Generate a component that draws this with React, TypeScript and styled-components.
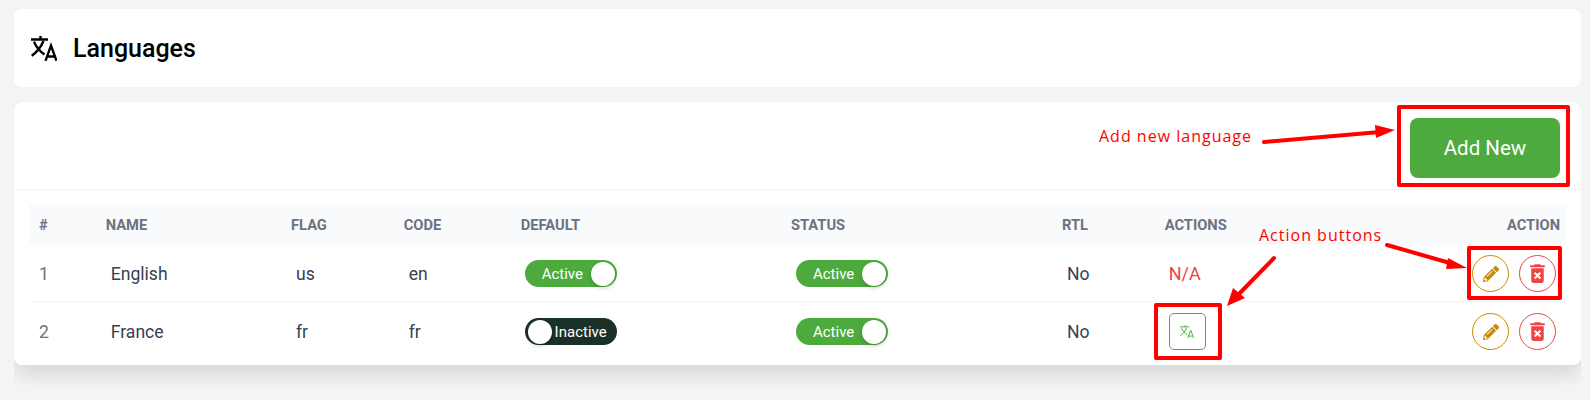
import React from "react";
import styled, { createGlobalStyle } from "styled-components";
import { MdDeleteForever } from "react-icons/md";
import { FaPencilAlt } from "react-icons/fa";

const Global = createGlobalStyle`
  html, body { margin: 0; padding: 0; background: #f3f4f6; font-family: Roboto, "Liberation Sans", sans-serif; }
`;
const Page = styled.div`
  position: relative;
  width: 1590px;
  height: 400px;
  overflow: hidden;
  padding: 9px 9px 0 14px;
  box-sizing: border-box;
`;
const HeaderCard = styled.div`
  display: flex;
  align-items: center;
  gap: 16px;
  height: 78px;
  padding-left: 17px;
  background: #fff;
  border-radius: 8px;
  margin-bottom: 15px;
`;
const Title = styled.h1`
  margin: 0;
  font-size: 25px;
  font-weight: 500;
  color: #000;
`;
const ShadowClip = styled.div`
  overflow: hidden;
  padding-bottom: 20px;
`;
const Card = styled.div`
  background: #fff;
  border-radius: 8px;
  box-shadow: 0 10px 20px rgba(0, 0, 0, 0.12);
`;
const CardTop = styled.div`
  display: flex;
  justify-content: flex-end;
  align-items: center;
  box-sizing: border-box;
  height: 88px;
  padding: 4px 21px 0 0;
  border-bottom: 1px solid #f3f4f6;
  margin-bottom: 15px;
`;
const AddButton = styled.button`
  width: 150px;
  height: 60px;
  border: 0;
  border-radius: 8px;
  background: #4dab3e;
  color: #fff;
  font: 400 20.5px Roboto, sans-serif;
`;
const TableWrap = styled.div`
  padding: 0 15px;
`;
const Cols = "66.7px 185.3px 112.7px 117px 270.3px 271px 102.7px 1fr";
const HeadRow = styled.div`
  display: grid;
  grid-template-columns: ${Cols};
  height: 40px;
  align-items: center;
  background: #f9fafb;
`;
const HeadCell = styled.div<{ $right?: boolean }>`
  padding: 0 ${(p) => (p.$right ? "6px" : "0")} 0 10px;
  font-size: 14.7px;
  font-weight: 700;
  color: #6b7280;
  text-align: ${(p) => (p.$right ? "right" : "left")};
`;
const Row = styled.div<{ $h: number; $line?: boolean; $pt?: number; $pb?: number }>`
  display: grid;
  grid-template-columns: ${Cols};
  box-sizing: border-box;
  height: ${(p) => p.$h}px;
  padding-top: ${(p) => p.$pt ?? 0}px;
  padding-bottom: ${(p) => p.$pb ?? 0}px;
  align-items: center;
  border-bottom: ${(p) => (p.$line ? "1px solid #f3f4f6" : "0")};
`;
const IndexCell = styled.div`
  padding-left: 10px;
  font-size: 17.6px;
  color: #6b7280;
`;
const Cell = styled.div<{ $pad?: number }>`
  padding-left: ${(p) => p.$pad ?? 15}px;
  font-size: 17.6px;
  color: #374151;
`;
const NA = styled.span`
  font-size: 18px;
  color: #ef4444;
`;
const ActionCell = styled.div`
  display: flex;
  justify-content: flex-end;
  gap: 10px;
  padding-right: 10px;
`;
const Toggle = styled.div<{ $on: boolean }>`
  display: flex;
  flex-direction: ${(p) => (p.$on ? "row" : "row-reverse")};
  align-items: center;
  justify-content: space-between;
  box-sizing: border-box;
  width: 92px;
  height: 27px;
  padding: ${(p) => (p.$on ? "0 2px 0 17px" : "0 10px 0 3px")};
  border-radius: 14px;
  background: ${(p) => (p.$on ? "#4dab3e" : "#1b3027")};
  color: #fff;
  font-size: 15px;
`;
const Knob = styled.span`
  width: 24px;
  height: 24px;
  border-radius: 50%;
  background: #fff;
  box-shadow: 0 2px 4px rgba(0, 0, 0, 0.2);
`;
const RoundBtn = styled.button<{ $c: string }>`
  display: flex;
  align-items: center;
  justify-content: center;
  width: 37px;
  height: 37px;
  padding: 0;
  border-radius: 50%;
  border: 1px solid ${(p) => p.$c};
  background: #fff;
  color: ${(p) => p.$c};
`;
const TranslateBtn = styled.button`
  display: flex;
  align-items: center;
  justify-content: center;
  width: 37px;
  height: 37px;
  padding: 0;
  border-radius: 5px;
  border: 1px solid #4dab3e;
  background: #fff;
  color: #4dab3e;
`;
const EndSplit = styled.div`
  display: grid;
  grid-template-columns: 1fr auto;
  align-items: center;
`;
const LeftSlot = styled.div`
  padding-left: 14px;
`;
const Mark = styled.div<{ $x: number; $y: number; $w: number; $h: number }>`
  position: absolute;
  left: ${(p) => p.$x}px;
  top: ${(p) => p.$y}px;
  width: ${(p) => p.$w}px;
  height: ${(p) => p.$h}px;
  box-sizing: border-box;
  border: 4px solid #f00;
  border-radius: 2px;
`;
const Note = styled.div<{ $x: number; $y: number }>`
  position: absolute;
  left: ${(p) => p.$x}px;
  top: ${(p) => p.$y}px;
  font: 400 16px "Open Sans", sans-serif;
  letter-spacing: 1px;
  color: #f00;
  white-space: nowrap;
`;
const Arrows = styled.svg`
  position: absolute;
  left: 0;
  top: 0;
  pointer-events: none;
`;

const TranslateIcon = ({ w, sw }: { w: number; sw: number }) => (
  <svg width={w} height={(w * 25) / 26} viewBox="0 0 26 25" fill="none" stroke="currentColor" strokeWidth={sw}>
    <path d="M0 3.5H17M9.5 0V3.5" />
    <path d="M12.5 5C10 11 6 16 .7 19.7M3 5.7C5 11 9 15.5 13.5 18.5" />
    <path d="M14.5 24.8L20 9.5L25.5 24.8M16 20.5H24" />
  </svg>
);
const Switch = ({ on }: { on: boolean }) => (
  <Toggle $on={on}>
    <span>{on ? "Active" : "Inactive"}</span>
    <Knob />
  </Toggle>
);
const Actions = () => (
  <ActionCell>
    <RoundBtn $c="#ca8a04"><FaPencilAlt size={16} /></RoundBtn>
    <RoundBtn $c="#ef4444"><MdDeleteForever size={25} /></RoundBtn>
  </ActionCell>
);
const HeadEnd = () => (
  <EndSplit>
    <HeadCell>ACTIONS</HeadCell>
    <HeadCell $right>ACTION</HeadCell>
  </EndSplit>
);
const RowEnd = ({ left }: { left: React.ReactNode }) => (
  <EndSplit>
    <LeftSlot>{left}</LeftSlot>
    <Actions />
  </EndSplit>
);

export default function App() {
  return (
    <Page>
      <Global />
      <HeaderCard>
        <TranslateIcon w={26} sw={2.4} />
        <Title>Languages</Title>
      </HeaderCard>
      <ShadowClip>
        <Card>
          <CardTop>
            <AddButton>Add New</AddButton>
          </CardTop>
          <TableWrap>
            <HeadRow>
              <HeadCell>#</HeadCell>
              <HeadCell>NAME</HeadCell>
              <HeadCell>FLAG</HeadCell>
              <HeadCell>CODE</HeadCell>
              <HeadCell>DEFAULT</HeadCell>
              <HeadCell>STATUS</HeadCell>
              <HeadCell>RTL</HeadCell>
              <HeadEnd />
            </HeadRow>
            <Row $h={57} $pt={1} $line>
              <IndexCell>1</IndexCell>
              <Cell>English</Cell>
              <Cell>us</Cell>
              <Cell>en</Cell>
              <Cell $pad={14}><Switch on /></Cell>
              <Cell><Switch on /></Cell>
              <Cell>No</Cell>
              <RowEnd left={<NA>N/A</NA>} />
            </Row>
            <Row $h={63} $pb={4}>
              <IndexCell>2</IndexCell>
              <Cell>France</Cell>
              <Cell>fr</Cell>
              <Cell>fr</Cell>
              <Cell $pad={14}><Switch on={false} /></Cell>
              <Cell><Switch on /></Cell>
              <Cell>No</Cell>
              <RowEnd left={<TranslateBtn><TranslateIcon w={14} sw={1.8} /></TranslateBtn>} />
            </Row>
          </TableWrap>
        </Card>
      </ShadowClip>
      <Mark $x={1397} $y={105} $w={173} $h={82} />
      <Mark $x={1467} $y={246} $w={95} $h={54} />
      <Mark $x={1154} $y={303} $w={68} $h={57} />
      <Note $x={1099} $y={125}>Add new language</Note>
      <Note $x={1259} $y={224}>Action buttons</Note>
      <Arrows width="1590" height="400">
        <g fill="#f00" stroke="#f00" strokeLinecap="round">
          <line x1="1264" y1="142" x2="1380" y2="132" strokeWidth="4" />
          <polygon points="1375,125 1395,130 1376,138" stroke="none" />
          <line x1="1387" y1="245" x2="1450" y2="263" strokeWidth="4" />
          <polygon points="1448,258 1467,268 1446,269" stroke="none" />
          <line x1="1274" y1="258" x2="1238" y2="295" strokeWidth="4" />
          <polygon points="1233,288 1227,306 1245,298" stroke="none" />
        </g>
      </Arrows>
    </Page>
  );
}
